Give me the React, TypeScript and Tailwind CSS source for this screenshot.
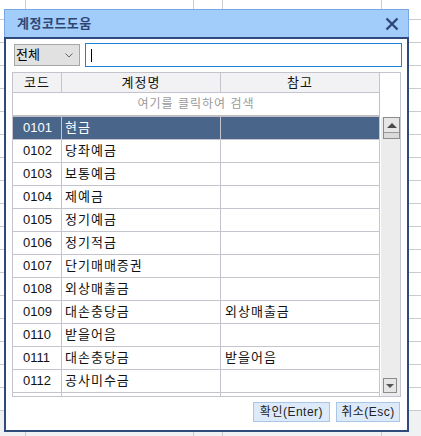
import React from "react";

const rows: [string, string, string][] = [
  ["0101", "현금", ""],
  ["0102", "당좌예금", ""],
  ["0103", "보통예금", ""],
  ["0104", "제예금", ""],
  ["0105", "정기예금", ""],
  ["0106", "정기적금", ""],
  ["0107", "단기매매증권", ""],
  ["0108", "외상매출금", ""],
  ["0109", "대손충당금", "외상매출금"],
  ["0110", "받을어음", ""],
  ["0111", "대손충당금", "받을어음"],
  ["0112", "공사미수금", ""],
  ["", "", ""],
];

function BgRow({ first, last }: { first?: boolean; last?: boolean }) {
  return (
    <div
      className={
        "flex shrink-0 " +
        (first ? "h-[19px]" : last ? "h-[26px] border-t border-[#c9cbd0] bg-[#f0f1f3]" : "h-[23px] border-t border-[#c9cbd0]")
      }
    >
      <div className="w-[26px] border-r border-[#c9cbd0]" />
      <div className="w-[168px] border-r border-[#c9cbd0]" />
      <div className="w-[29px] border-r border-[#c9cbd0]" />
      <div className="w-[159px] border-r border-[#c9cbd0]" />
      <div className="flex-1" />
    </div>
  );
}

export default function App() {
  const bgRows = Array.from({ length: 17 }, (_, i) => i);
  return (
    <div className="relative w-[421px] h-[436px] overflow-hidden bg-white [font-family:'Liberation_Sans','Noto_Sans_CJK_KR',sans-serif] text-[#111]">
      {/* spreadsheet background */}
      <div className="flex flex-col">
        <BgRow first />
        {bgRows.map((i) => (
          <BgRow key={i} />
        ))}
        <BgRow last />
      </div>

      {/* dialog window */}
      <div className="absolute left-[4px] top-[9px] w-[405px] h-[423px] flex flex-col">
        <div className="h-[28px] shrink-0 bg-[#a2cdfb] border border-b-0 border-[#78a8e4] flex items-center justify-between pl-[12px] pr-[9px]">
          <span className="text-[13px] font-bold text-[#2f4675] tracking-[0.5px]">계정코드도움</span>
          <svg width="14" height="14" viewBox="0 0 14 14">
            <path d="M1.5 1.5 L12.5 12.5 M12.5 1.5 L1.5 12.5" stroke="#2f4675" strokeWidth="2.4" />
          </svg>
        </div>
        <div className="flex-1 border-2 border-[#2f4b7c] bg-white flex flex-col">
          {/* toolbar */}
          <div className="mt-[4px] h-[24px] flex items-center pl-[8px] pr-[5px] gap-[5px]">
            <div className="w-[66px] h-[22px] bg-[#e1e1e1] border border-[#a6a6a6] flex items-center justify-between pl-[1px] pr-[6px]">
              <span className="text-[13px] text-black">전체</span>
              <svg width="8" height="5" viewBox="0 0 8 5">
                <path d="M0.5 0.5 L4 4 L7.5 0.5" stroke="#666" strokeWidth="1" fill="none" />
              </svg>
            </div>
            <div className="flex-1 h-[24px] border border-[#1e80d6] bg-white flex items-center pl-[5px]">
              <span className="w-px h-[13px] bg-black" />
            </div>
          </div>

          {/* table */}
          <div className="mt-[5px] mx-[6px] h-[325px] border border-[#c4c4cc] flex overflow-hidden">
            <div className="w-[367px] flex flex-col">
              <div className="h-[20px] shrink-0 flex bg-[#f2f2f4] border-b border-[#c4c4cc] text-[13px] tracking-[1px]">
                <div className="w-[49px] border-r border-[#c4c4cc] flex items-center justify-center">코드</div>
                <div className="w-[159px] border-r border-[#c4c4cc] flex items-center justify-center">계정명</div>
                <div className="w-[159px] border-r border-[#c4c4cc] flex items-center justify-center">참고</div>
              </div>
              <div className="h-[24px] shrink-0 border-b-2 border-r border-[#c0c0c4] flex items-center justify-center text-[12px] tracking-[1px] text-[#9a9a9a]">
                여기를 클릭하여 검색
              </div>
              <div className="flex-1 flex flex-col overflow-hidden">
                {rows.map(([code, name, ref], i) => {
                  const sel = i === 0;
                  return (
                    <div
                      key={i}
                      className={
                        "h-[23px] shrink-0 flex border-b border-[#c4c4cc] text-[13px] " +
                        (sel ? "bg-[#4a658a] text-white" : "bg-white text-[#111]")
                      }
                    >
                      <div className="w-[49px] border-r border-[#c4c4cc] flex items-center pl-[10px]">{code}</div>
                      <div className="w-[159px] border-r border-[#c4c4cc] flex items-center pl-[3px] tracking-[1px]">{name}</div>
                      <div className="w-[159px] border-r border-[#c4c4cc] flex items-center pl-[4px] tracking-[1px]">{ref}</div>
                    </div>
                  );
                })}
              </div>
            </div>
            <div className="w-[20px] flex flex-col">
              <div className="h-[44px] shrink-0 bg-white" />
              <div className="flex-1 ml-[1px] bg-[#ececec] flex flex-col justify-between pb-[3px]">
                <div className="ml-[2px] w-[17px] border border-[#8c8c8c] flex flex-col">
                  <div className="h-[14px] bg-[#e6e6e6] flex items-center justify-center">
                    <div className="w-0 h-0 border-x-[5px] border-x-transparent border-b-[5px] border-b-[#4a4a4a]" />
                  </div>
                  <div className="h-[6px] border-t border-[#9a9a9a] bg-[#dadada]" />
                </div>
                <div className="ml-[2px] w-[14px] h-[15px] border border-[#8c8c8c] bg-[#e6e6e6] flex items-center justify-center">
                  <div className="w-0 h-0 border-x-[4px] border-x-transparent border-t-[4px] border-t-[#555]" />
                </div>
              </div>
            </div>
          </div>

          {/* buttons */}
          <div className="mt-[5px] flex justify-end gap-[6px] pr-[7px]">
            <div className="w-[77px] h-[20px] bg-[#dceafa] border border-[#a9c6e6] flex items-center justify-center text-[12px] tracking-[0.5px] text-[#222]">
              확인(Enter)
            </div>
            <div className="w-[64px] h-[20px] bg-[#dceafa] border border-[#a9c6e6] flex items-center justify-center text-[12px] tracking-[0.5px] text-[#222]">
              취소(Esc)
            </div>
          </div>
        </div>
      </div>
    </div>
  );
}
